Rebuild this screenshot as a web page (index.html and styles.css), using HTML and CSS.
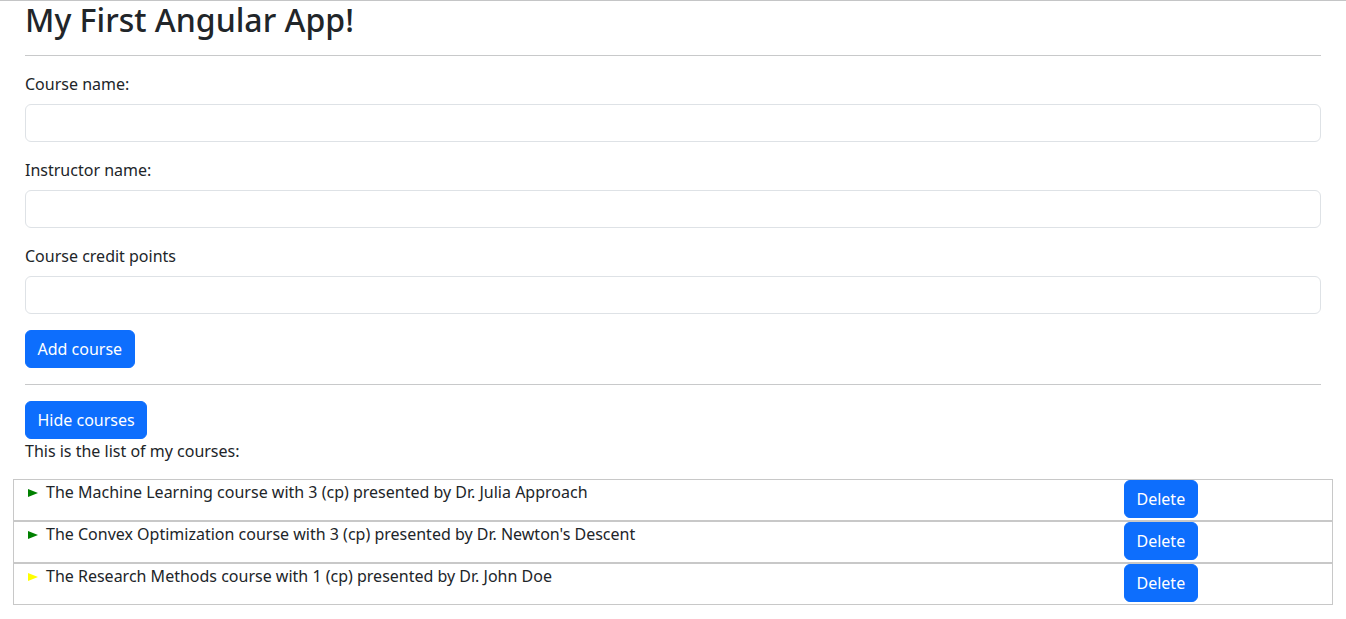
FILE: index.html
```html
<!DOCTYPE html>
<html lang="en">
<head>
<meta charset="utf-8">
<title>My First Angular App!</title>
<link rel="stylesheet" href="styles.css">
</head>
<body>
<div class="top-rule"></div>
<main class="container">
  <h1 class="title">My First Angular App!</h1>
  <hr class="divider">
  <form class="course-form">
    <div class="field">
      <label class="field-label" for="cname">Course name:</label>
      <input class="field-input" id="cname" type="text">
    </div>
    <div class="field">
      <label class="field-label" for="iname">Instructor name:</label>
      <input class="field-input" id="iname" type="text">
    </div>
    <div class="field">
      <label class="field-label" for="cp">Course credit points</label>
      <input class="field-input" id="cp" type="text">
    </div>
    <button class="btn" type="button">Add course</button>
  </form>
  <hr class="divider">
  <button class="btn" type="button">Hide courses</button>
  <p class="list-intro">This is the list of my courses:</p>
  <div class="course-list">
    <div class="course-row">
      <div class="course-text"><span class="marker marker-green"></span>The Machine Learning course with 3 (cp) presented by Dr. Julia Approach</div>
      <div class="course-action"><button class="btn" type="button">Delete</button></div>
    </div>
    <div class="course-row">
      <div class="course-text"><span class="marker marker-green"></span>The Convex Optimization course with 3 (cp) presented by Dr. Newton's Descent</div>
      <div class="course-action"><button class="btn" type="button">Delete</button></div>
    </div>
    <div class="course-row">
      <div class="course-text"><span class="marker marker-yellow"></span>The Research Methods course with 1 (cp) presented by Dr. John Doe</div>
      <div class="course-action"><button class="btn" type="button">Delete</button></div>
    </div>
  </div>
</main>
</body>
</html>
```
FILE: styles.css
```css
* { box-sizing: border-box; }

html, body {
  margin: 0;
  padding: 0;
  background: #fff;
}

body {
  font-family: "Noto Sans", "Open Sans", sans-serif;
  font-size: 16px;
  line-height: 1.5;
  color: #212529;
}

.top-rule {
  height: 1px;
  background: #c4c5c6;
}

.container {
  padding: 0 25px;
}

.title {
  margin: 0;
  font-size: 32px;
  font-weight: 500;
  line-height: 1.2;
}

.divider {
  margin: 15.6px 0 16px;
  border: 0;
  border-top: 1px solid #c8c9ca;
  height: 0;
}

.course-form {
  margin: 0;
}

.field {
  display: flex;
  flex-direction: column;
  gap: 8px;
  margin-bottom: 16px;
}

.field-label {
  display: block;
}

.field-input {
  display: block;
  width: 100%;
  height: 38px;
  padding: 6px 12px;
  font: inherit;
  color: #212529;
  background: #fff;
  border: 1px solid #dee2e6;
  border-radius: 6px;
}

.btn {
  display: inline-block;
  padding: 6px 11.5px;
  font-family: inherit;
  font-size: 16px;
  line-height: 24px;
  color: #fff;
  background: #0d6efd;
  border: 1px solid #0d6efd;
  border-radius: 6px;
  cursor: pointer;
}

.list-intro {
  margin: 0 0 16px;
}

.course-list {
  margin: 0 -12px;
}

.course-row {
  display: grid;
  grid-template-columns: 1110px 1fr;
  height: 42px;
  border: 1px solid #c8c8c8;
}

.course-text {
  display: flex;
  align-items: flex-start;
  padding-left: 14px;
}

.marker {
  display: inline-block;
  width: 0;
  height: 0;
  margin: 9px 8px 0 0;
  border-top: 4px solid transparent;
  border-bottom: 4px solid transparent;
  border-left: 10px solid #008000;
}

.marker-green { border-left-color: #008000; }
.marker-yellow { border-left-color: #ffff00; }

.course-action {
  display: flex;
  align-items: flex-start;
}
```
